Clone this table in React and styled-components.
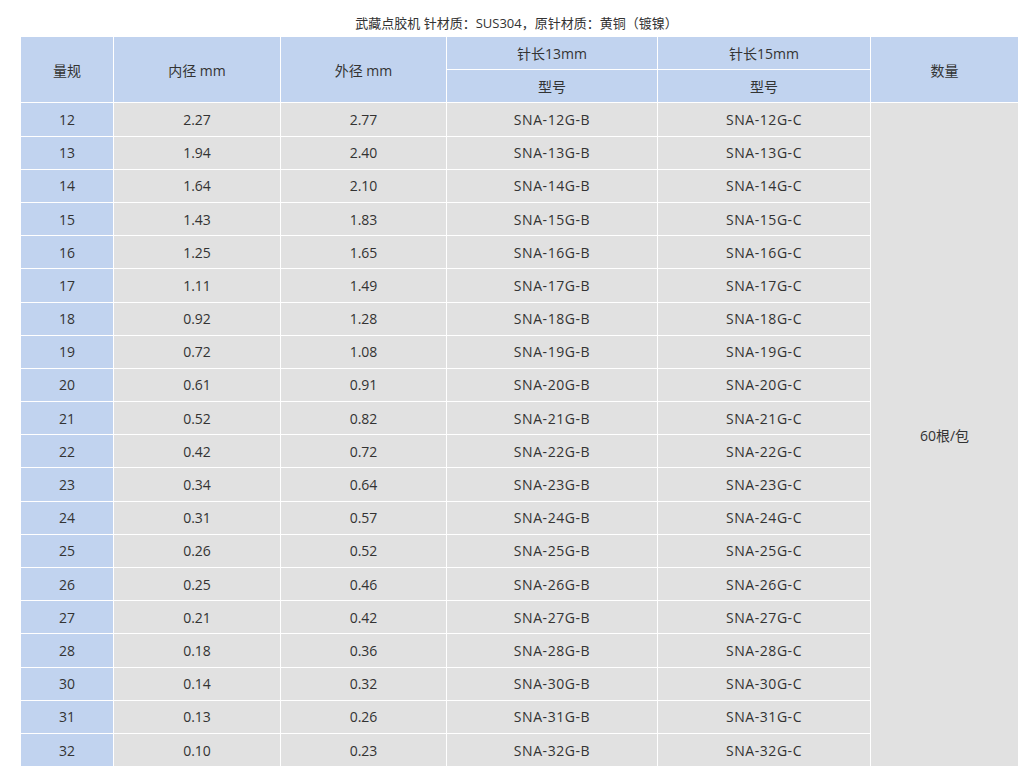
import React from 'react';
import styled, { createGlobalStyle } from 'styled-components';

const GlobalStyle = createGlobalStyle`
    body {
        margin: 0;
        background: #fff;
        font-family: "Open Sans", "Noto Sans CJK SC", sans-serif;
        color: #333;
    }
`;

const Page = styled.div`
    padding: 11px 15px 0 20px;
`;

const Title = styled.div`
    font-size: 13px;
    line-height: 25px;
    height: 25px;
    text-align: center;
    margin-left: -20px;
    margin-right: -15px;
`;

const Table = styled.table`
    width: 998px;
    border-collapse: collapse;
    table-layout: fixed;
    font-size: 14px;
`;

const Col = styled.col`
    width: ${props => props.$w}px;
`;

const Cell = styled.td`
    border: 1px solid #fff;
    text-align: center;
    vertical-align: middle;
    padding: 0;
    color: #333;
    letter-spacing: ${props => props.$model ? "0.55px" : "0"};
    background: ${props => props.$head ? "#c1d3ef" : "#e1e1e1"};
`;

const HeadCell = styled.th`
    border: 1px solid #fff;
    text-align: center;
    vertical-align: middle;
    padding: 0;
    font-weight: 400;
    color: #333;
    background: #c1d3ef;
`;

const Row = styled.tr`
    height: 33.2px;
`;

const widths = [93, 167, 166, 211, 213, 148];

const rows = [
    ["12", "2.27", "2.77"],
    ["13", "1.94", "2.40"],
    ["14", "1.64", "2.10"],
    ["15", "1.43", "1.83"],
    ["16", "1.25", "1.65"],
    ["17", "1.11", "1.49"],
    ["18", "0.92", "1.28"],
    ["19", "0.72", "1.08"],
    ["20", "0.61", "0.91"],
    ["21", "0.52", "0.82"],
    ["22", "0.42", "0.72"],
    ["23", "0.34", "0.64"],
    ["24", "0.31", "0.57"],
    ["25", "0.26", "0.52"],
    ["26", "0.25", "0.46"],
    ["27", "0.21", "0.42"],
    ["28", "0.18", "0.36"],
    ["30", "0.14", "0.32"],
    ["31", "0.13", "0.26"],
    ["32", "0.10", "0.23"],
];

function App() {
    return (
        <Page>
            <GlobalStyle />
            <Title>武藏点胶机 针材质：SUS304，原针材质：黄铜（镀镍）</Title>
            <Table>
                <colgroup>
                    {widths.map((w, i) => <Col key={i} $w={w} />)}
                </colgroup>
                <thead>
                    <Row>
                        <HeadCell rowSpan={2}>量规</HeadCell>
                        <HeadCell rowSpan={2}>内径 mm</HeadCell>
                        <HeadCell rowSpan={2}>外径 mm</HeadCell>
                        <HeadCell>针长13mm</HeadCell>
                        <HeadCell>针长15mm</HeadCell>
                        <HeadCell rowSpan={2}>数量</HeadCell>
                    </Row>
                    <Row>
                        <HeadCell>型号</HeadCell>
                        <HeadCell>型号</HeadCell>
                    </Row>
                </thead>
                <tbody>
                    {rows.map((r, i) => (
                        <Row key={r[0]}>
                            <Cell $head>{r[0]}</Cell>
                            <Cell>{r[1]}</Cell>
                            <Cell>{r[2]}</Cell>
                            <Cell $model>SNA-{r[0]}G-B</Cell>
                            <Cell $model>SNA-{r[0]}G-C</Cell>
                            {i === 0 && <Cell rowSpan={rows.length}>60根/包</Cell>}
                        </Row>
                    ))}
                </tbody>
            </Table>
        </Page>
    );
}

export default App;
